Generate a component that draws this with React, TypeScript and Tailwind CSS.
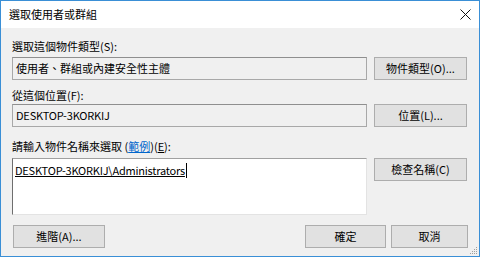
import React from "react";

const font = { fontFamily: '"Segoe UI", "Noto Sans CJK TC", "Noto Sans", sans-serif' };

function Btn({ children, w, className = "" }: { children: React.ReactNode; w: string; className?: string }) {
  return (
    <div
      className={`${w} h-[23px] shrink-0 border border-[#adadad] bg-[#e1e1e1] flex items-center justify-center text-[11px] text-black ${className}`}
    >
      {children}
    </div>
  );
}

export default function App() {
  return (
    <div
      className="w-[480px] h-[257px] border border-[#3a8fd6] bg-[#f0f0f0] flex flex-col text-black overflow-hidden"
      style={font}
    >
      {/* title bar */}
      <div className="h-[27px] bg-white flex items-center justify-between pl-[8px] pr-[8px] shrink-0">
        <span className="text-[11px] leading-none">選取使用者或群組</span>
        <svg width="11" height="11" viewBox="0 0 11 11">
          <path d="M0.5 0.5 L10.5 10.5 M10.5 0.5 L0.5 10.5" stroke="#111" strokeWidth="1" fill="none" />
        </svg>
      </div>

      {/* body */}
      <div className="flex flex-col pl-[11px] pr-[11px] pt-[10px] relative flex-1">
        <div className="h-[16px] leading-[16px] text-[11px] mb-[3px]">選取這個物件類型(S):</div>
        <div className="flex gap-[7px]">
          <div className="w-[355px] h-[23px] border border-[#a8a8a8] border-t-[#8f8f8f] bg-[#f0f0f0] flex items-center pl-[3px] text-[11px]">
            使用者、群組或內建安全性主體
          </div>
          <Btn w="w-[93px]">物件類型(O)...</Btn>
        </div>

        <div className="h-[16px] leading-[16px] text-[11px] mt-[7px] mb-[1px]">從這個位置(F):</div>
        <div className="flex gap-[7px]">
          <div className="w-[355px] h-[23px] border border-[#a8a8a8] border-t-[#8f8f8f] bg-[#f0f0f0] flex items-center pl-[3px] text-[11px] tracking-[-0.2px]">
            DESKTOP-3KORKIJ
          </div>
          <Btn w="w-[93px]">位置(L)...</Btn>
        </div>

        <div className="h-[16px] leading-[16px] text-[11px] mt-[11px] mb-[4px]">
          請輸入物件名稱來選取 (<span className="text-[#0066cc] underline">範例</span>)(<span className="underline">E</span>):
        </div>
        <div className="flex gap-[7px]">
          <div className="w-[355px] h-[57px] border border-t-[#a0a0a0] border-l-[#6e6e6e] border-r-[#e3e3e3] border-b-[#e3e3e3] bg-white pl-[2px] pt-[3px] text-[11px]">
            <div className="flex items-center h-[16px]">
              <span className="underline leading-[16px] tracking-[-0.22px]">DESKTOP-3KORKIJ\Administrators</span>
              <span className="w-px h-[15px] bg-black ml-[1px]" />
            </div>
          </div>
          <Btn w="w-[93px]">檢查名稱(C)</Btn>
        </div>

        <div className="flex mt-[10px] items-start">
          <Btn w="w-[92px]" className="ml-[1px]">進階(A)...</Btn>
          <div className="flex-1" />
          <Btn w="w-[81px]">確定</Btn>
          <Btn w="w-[77px]" className="ml-[5px]">取消</Btn>
        </div>

        {/* resize grip */}
        <svg width="8" height="8" viewBox="0 0 8 8" className="absolute right-[1px] bottom-[1px]">
          <rect x="6" y="0" width="1" height="1" fill="#a0a0a0" />
          <rect x="4" y="2" width="1" height="1" fill="#a0a0a0" />
          <rect x="6" y="2" width="1" height="1" fill="#a0a0a0" />
          <rect x="2" y="4" width="1" height="1" fill="#a0a0a0" />
          <rect x="4" y="4" width="1" height="1" fill="#a0a0a0" />
          <rect x="6" y="4" width="1" height="1" fill="#a0a0a0" />
          <rect x="0" y="6" width="1" height="1" fill="#a0a0a0" />
          <rect x="2" y="6" width="1" height="1" fill="#a0a0a0" />
          <rect x="4" y="6" width="1" height="1" fill="#a0a0a0" />
          <rect x="6" y="6" width="1" height="1" fill="#a0a0a0" />
        </svg>
      </div>
    </div>
  );
}
